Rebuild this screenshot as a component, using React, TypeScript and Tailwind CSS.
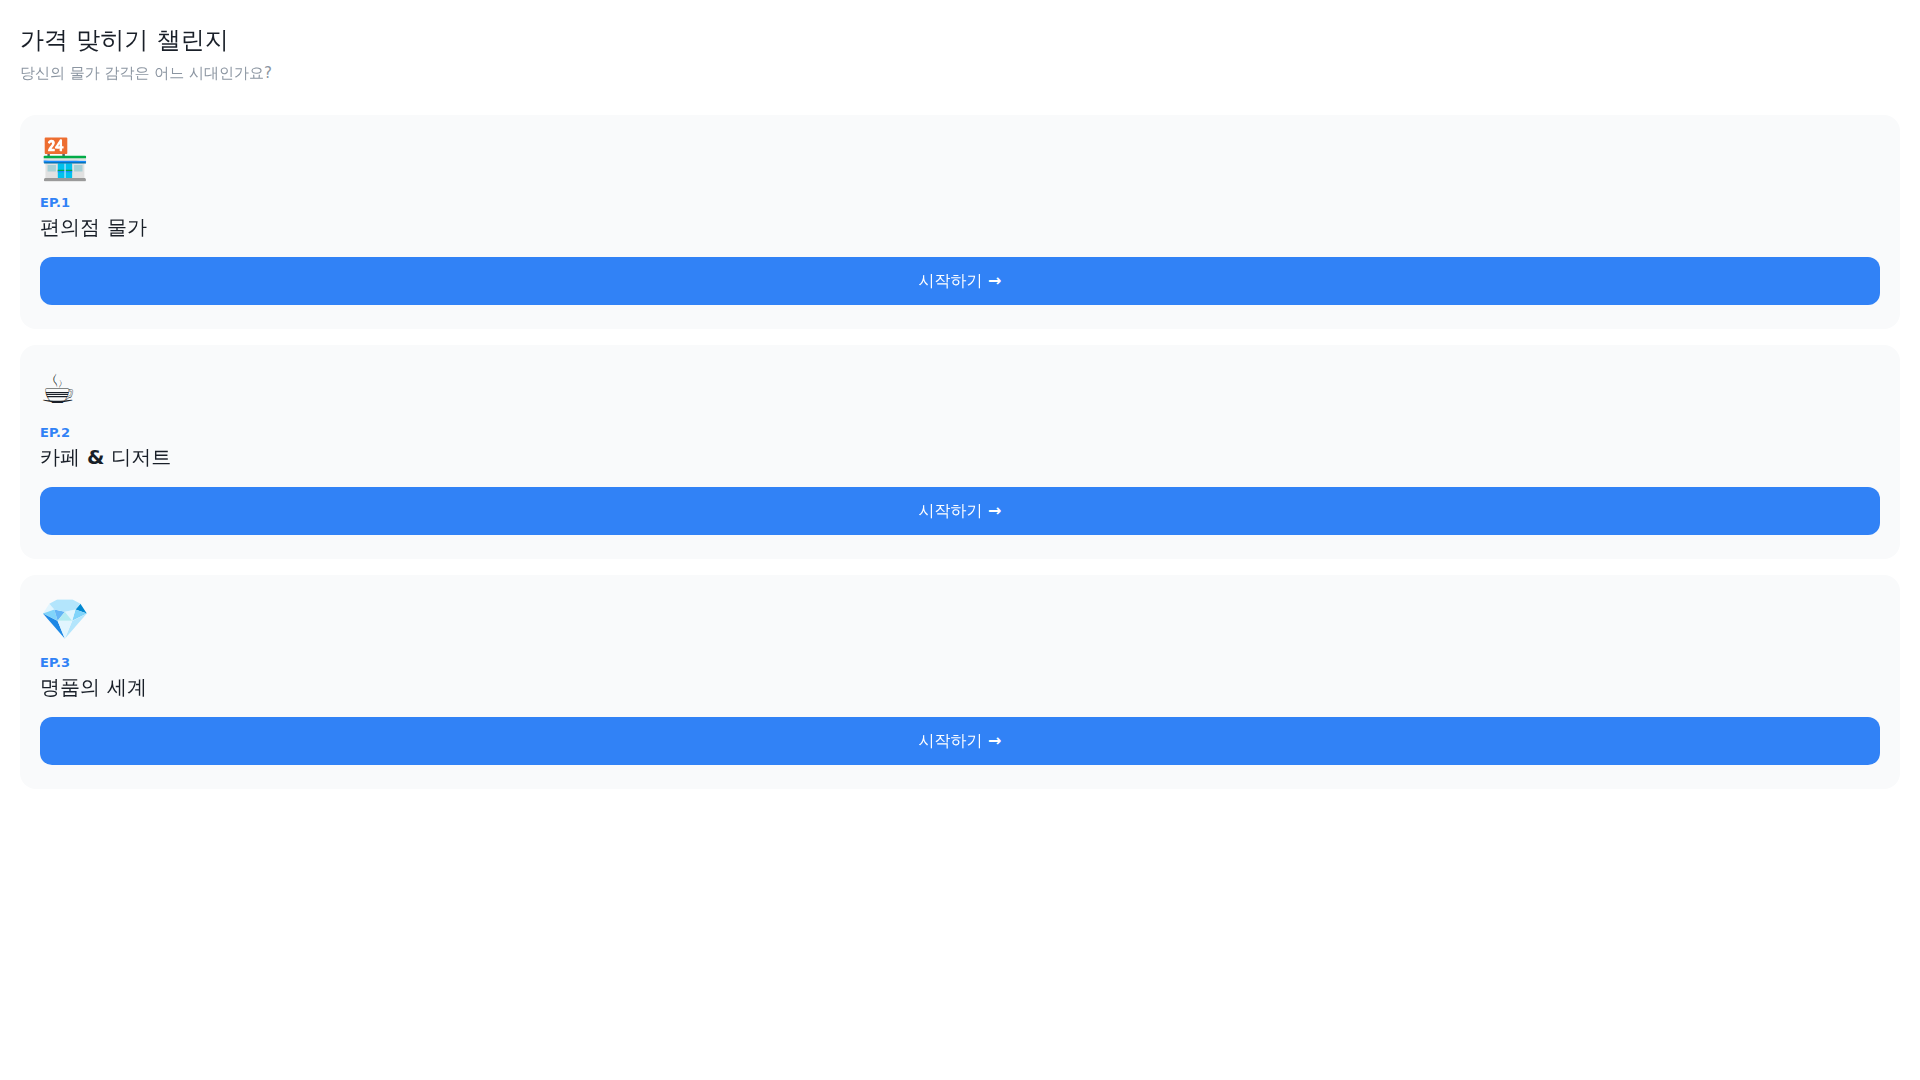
const episodes = [
  { id: 'EP.1', icon: '🏪', title: '편의점 물가' },
  { id: 'EP.2', icon: '☕', title: '카페 & 디저트' },
  { id: 'EP.3', icon: '💎', title: '명품의 세계' },
];

export default function App() {
  return (
    <main
      lang="ko"
      className="min-h-screen bg-white px-5 py-6 font-['DejaVu_Sans','WenQuanYi_Zen_Hei','Noto_Sans_CJK_KR',sans-serif] text-[#191f28]"
    >
      <header className="mb-[30px]">
        <h1 className="text-2xl leading-8 font-bold">가격 맞히기 챌린지</h1>
        <p className="mt-1.5 text-[15px] leading-[23px] text-[#8b95a1]">당신의 물가 감각은 어느 시대인가요?</p>
      </header>
      <div className="flex flex-col gap-4">
        {episodes.map((ep) => (
          <section key={ep.id} className="rounded-2xl bg-[#f9fafb] px-5 pt-5 pb-6">
            <div className="mb-3 text-[40px] leading-12">{ep.icon}</div>
            <p className="text-[13px] leading-4 font-bold text-[#3182f6]">{ep.id}</p>
            <h2 className="mt-1 text-xl leading-6 font-bold">{ep.title}</h2>
            <button
              type="button"
              className="mt-[18px] h-12 w-full cursor-pointer rounded-xl bg-[#3182f6] text-base font-bold text-white"
            >
              시작하기 →
            </button>
          </section>
        ))}
      </div>
    </main>
  );
}
